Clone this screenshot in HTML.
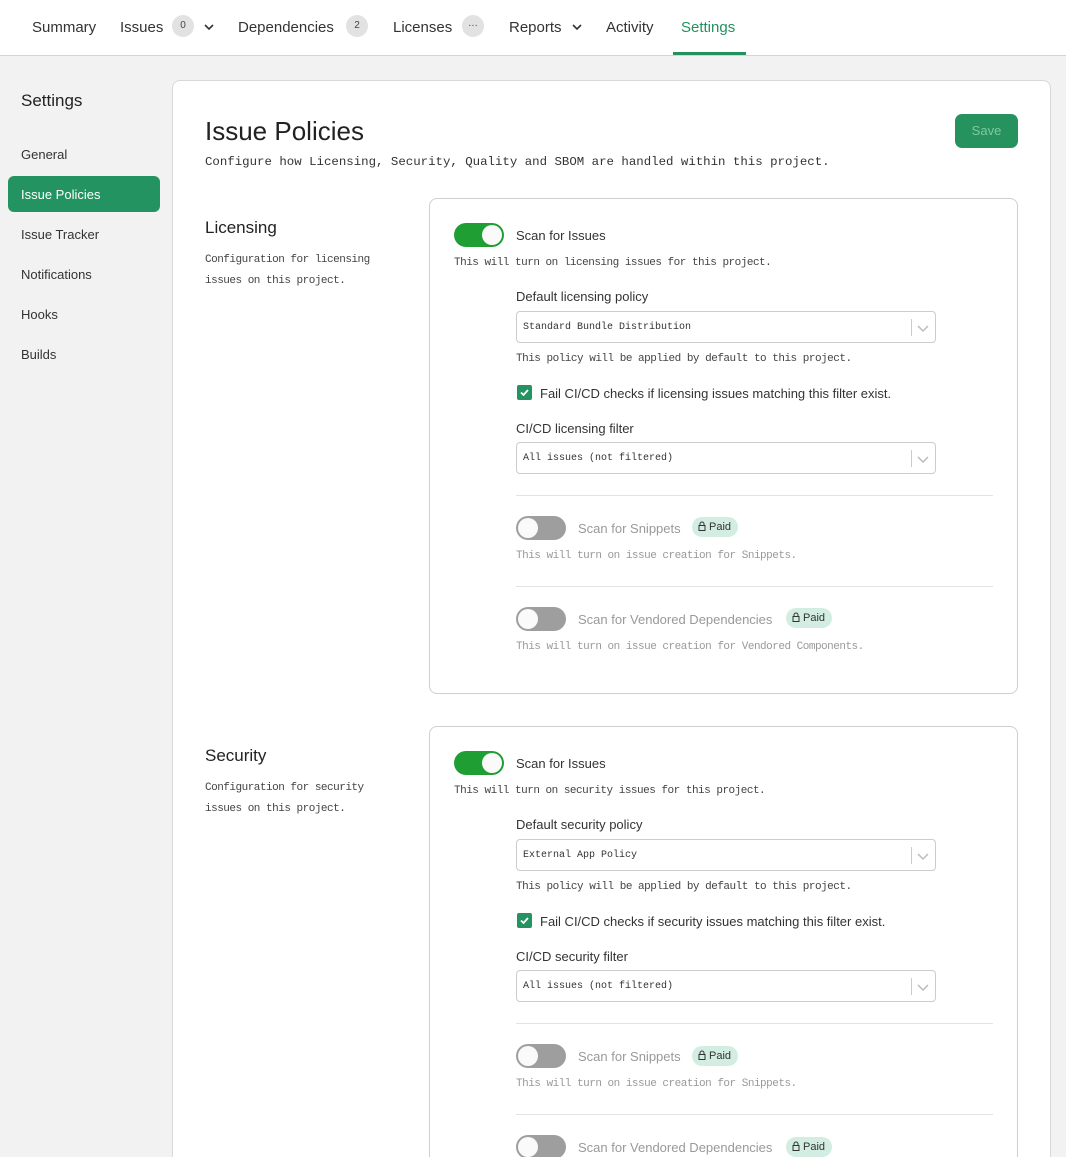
<!DOCTYPE html>
<html><head><meta charset="utf-8"><style>
*{box-sizing:border-box;margin:0;padding:0}
html{width:1066px;height:1157px;overflow:hidden}
body{width:1066px;height:1157px;overflow:hidden;background:#f2f2f2;font-family:"Liberation Sans",sans-serif;color:#222;position:relative}
.a{position:absolute;white-space:nowrap}
.nav{position:absolute;left:0;top:0;width:1066px;height:56px;background:#fff;border-bottom:1px solid #d4d4d4}
.nav .a{font-size:15px;color:#333;top:19px}
.badge{position:absolute;top:15px;width:22px;height:22px;border-radius:11px;background:#e2e2e2;font-size:10px;color:#444;text-align:center;line-height:22px}
.chev{position:absolute;top:21px;width:12px;height:12px}
.side{font-size:13px;color:#333}
.card{position:absolute;left:172px;top:80px;width:879px;height:1100px;background:#fff;border:1px solid #d8d8d8;border-radius:8px}
.mono{font-family:"Liberation Mono",monospace}
.box{position:absolute;left:429px;width:589px;border:1px solid #cfcfcf;border-radius:8px;background:#fff}
.tg{position:absolute;width:50px;height:24px;border-radius:12px}
.tg::after{content:"";position:absolute;top:2px;width:20px;height:20px;border-radius:10px;background:#fafafa}
.on{background:#1e9e33}.on::after{left:28px}
.off{background:#9e9e9e}.off::after{left:2px}
.lbl{font-size:13px;color:#333}
.desc{font-family:"Liberation Mono",monospace;font-size:11px;letter-spacing:-0.5px;color:#444}
.sel{position:absolute;left:516px;width:420px;height:32px;border:1px solid #ccc;border-radius:4px;font-family:"Liberation Mono",monospace;font-size:10px;color:#333;padding-left:6px;line-height:30px}
.sel::before{content:"";position:absolute;right:23px;top:7px;width:1px;height:17px;background:#ccc}
.sel svg{position:absolute;right:5px;top:9px}
.cb{position:absolute;width:15px;height:15px;border-radius:2px;background:#239461}
.hr{position:absolute;left:516px;width:477px;height:1px;background:#e3e3e3}
.paid{position:absolute;height:20px;border-radius:10px;background:#d3ede2;font-size:11px;color:#333;padding:0 7px 0 6px;line-height:20px}
.paid svg{vertical-align:-1px;margin-right:3px}
.dim{color:#999}
</style></head><body>
<div class="nav">
<div class="a" style="left:32px">Summary</div>
<div class="a" style="left:120px">Issues</div>
<div class="badge" style="left:172px">0</div>
<svg class="chev" style="left:203px" viewBox="0 0 12 12"><path d="M2 4l4 4 4-4" fill="none" stroke="#333" stroke-width="1.6"/></svg>
<div class="a" style="left:238px">Dependencies</div>
<div class="badge" style="left:346px">2</div>
<div class="a" style="left:393px">Licenses</div>
<div class="badge" style="left:462px;line-height:18px">…</div>
<div class="a" style="left:509px">Reports</div>
<svg class="chev" style="left:571px" viewBox="0 0 12 12"><path d="M2 4l4 4 4-4" fill="none" stroke="#333" stroke-width="1.6"/></svg>
<div class="a" style="left:606px">Activity</div>
<div class="a" style="left:681px;color:#23915f">Settings</div>
<div style="position:absolute;left:673px;top:52px;width:73px;height:3px;background:#23915f"></div>
</div>

<div class="a" style="left:21px;top:91px;font-size:17px;color:#222">Settings</div>
<div class="a side" style="left:21px;top:147px">General</div>
<div style="position:absolute;left:8px;top:176px;width:152px;height:36px;border-radius:6px;background:#239461"></div>
<div class="a side" style="left:21px;top:187px;color:#fff">Issue Policies</div>
<div class="a side" style="left:21px;top:227px">Issue Tracker</div>
<div class="a side" style="left:21px;top:267px">Notifications</div>
<div class="a side" style="left:21px;top:307px">Hooks</div>
<div class="a side" style="left:21px;top:347px">Builds</div>

<div class="card"></div>
<div class="a" style="left:205px;top:116px;font-size:26px;color:#222">Issue Policies</div>
<div class="a mono" style="left:205px;top:155px;font-size:12.4px;color:#333">Configure how Licensing, Security, Quality and SBOM are handled within this project.</div>
<div style="position:absolute;left:955px;top:114px;width:63px;height:34px;border-radius:7px;background:#26935f;color:#80c8a0;font-size:13px;text-align:center;line-height:34px">Save</div>

<!-- Licensing -->
<div class="a" style="left:205px;top:218px;font-size:17px">Licensing</div>
<div class="a desc" style="left:205px;top:250px;line-height:21px">Configuration for licensing<br>issues on this project.</div>
<div class="box" style="top:198px;height:496px"></div>
<div class="tg on" style="left:454px;top:223px"></div>
<div class="a lbl" style="left:516px;top:228px">Scan for Issues</div>
<div class="a desc" style="left:454px;top:257px">This will turn on licensing issues for this project.</div>
<div class="a lbl" style="left:516px;top:289px">Default licensing policy</div>
<div class="sel" style="top:311px;line-height:32px">Standard Bundle Distribution<svg width="14" height="14" viewBox="0 0 14 14"><path d="M2 5l5 5 5-5" fill="none" stroke="#bbb" stroke-width="1.5"/></svg></div>
<div class="a desc" style="left:516px;top:353px">This policy will be applied by default to this project.</div>
<div class="cb" style="left:517px;top:385px"><svg width="15" height="15" viewBox="0 0 15 15"><path d="M4 7.5l2.5 2.5 4.5-5" fill="none" stroke="#fff" stroke-width="1.8"/></svg></div>
<div class="a lbl" style="left:540px;top:386px">Fail CI/CD checks if licensing issues matching this filter exist.</div>
<div class="a lbl" style="left:516px;top:421px">CI/CD licensing filter</div>
<div class="sel" style="top:442px;line-height:32px">All issues (not filtered)<svg width="14" height="14" viewBox="0 0 14 14"><path d="M2 5l5 5 5-5" fill="none" stroke="#bbb" stroke-width="1.5"/></svg></div>
<div class="hr" style="top:495px"></div>
<div class="tg off" style="left:516px;top:516px"></div>
<div class="a lbl dim" style="left:578px;top:521px">Scan for Snippets</div>
<div class="paid" style="left:692px;top:517px"><svg width="8" height="10" viewBox="0 0 8 10"><path d="M2 4.5V3a2 2 0 0 1 4 0v1.5M1 4.5h6v5H1z" fill="none" stroke="#333" stroke-width="1"/></svg>Paid</div>
<div class="a desc dim" style="left:516px;top:550px">This will turn on issue creation for Snippets.</div>
<div class="hr" style="top:586px"></div>
<div class="tg off" style="left:516px;top:607px"></div>
<div class="a lbl dim" style="left:578px;top:612px">Scan for Vendored Dependencies</div>
<div class="paid" style="left:786px;top:608px"><svg width="8" height="10" viewBox="0 0 8 10"><path d="M2 4.5V3a2 2 0 0 1 4 0v1.5M1 4.5h6v5H1z" fill="none" stroke="#333" stroke-width="1"/></svg>Paid</div>
<div class="a desc dim" style="left:516px;top:641px">This will turn on issue creation for Vendored Components.</div>

<!-- Security -->
<div class="a" style="left:205px;top:746px;font-size:17px">Security</div>
<div class="a desc" style="left:205px;top:778px;line-height:21px">Configuration for security<br>issues on this project.</div>
<div class="box" style="top:726px;height:500px"></div>
<div class="tg on" style="left:454px;top:751px"></div>
<div class="a lbl" style="left:516px;top:756px">Scan for Issues</div>
<div class="a desc" style="left:454px;top:785px">This will turn on security issues for this project.</div>
<div class="a lbl" style="left:516px;top:817px">Default security policy</div>
<div class="sel" style="top:839px;line-height:32px">External App Policy<svg width="14" height="14" viewBox="0 0 14 14"><path d="M2 5l5 5 5-5" fill="none" stroke="#bbb" stroke-width="1.5"/></svg></div>
<div class="a desc" style="left:516px;top:881px">This policy will be applied by default to this project.</div>
<div class="cb" style="left:517px;top:913px"><svg width="15" height="15" viewBox="0 0 15 15"><path d="M4 7.5l2.5 2.5 4.5-5" fill="none" stroke="#fff" stroke-width="1.8"/></svg></div>
<div class="a lbl" style="left:540px;top:914px">Fail CI/CD checks if security issues matching this filter exist.</div>
<div class="a lbl" style="left:516px;top:949px">CI/CD security filter</div>
<div class="sel" style="top:970px;line-height:32px">All issues (not filtered)<svg width="14" height="14" viewBox="0 0 14 14"><path d="M2 5l5 5 5-5" fill="none" stroke="#bbb" stroke-width="1.5"/></svg></div>
<div class="hr" style="top:1023px"></div>
<div class="tg off" style="left:516px;top:1044px"></div>
<div class="a lbl dim" style="left:578px;top:1049px">Scan for Snippets</div>
<div class="paid" style="left:692px;top:1046px"><svg width="8" height="10" viewBox="0 0 8 10"><path d="M2 4.5V3a2 2 0 0 1 4 0v1.5M1 4.5h6v5H1z" fill="none" stroke="#333" stroke-width="1"/></svg>Paid</div>
<div class="a desc dim" style="left:516px;top:1078px">This will turn on issue creation for Snippets.</div>
<div class="hr" style="top:1114px"></div>
<div class="tg off" style="left:516px;top:1135px"></div>
<div class="a lbl dim" style="left:578px;top:1140px">Scan for Vendored Dependencies</div>
<div class="paid" style="left:786px;top:1137px"><svg width="8" height="10" viewBox="0 0 8 10"><path d="M2 4.5V3a2 2 0 0 1 4 0v1.5M1 4.5h6v5H1z" fill="none" stroke="#333" stroke-width="1"/></svg>Paid</div>
</body></html>
